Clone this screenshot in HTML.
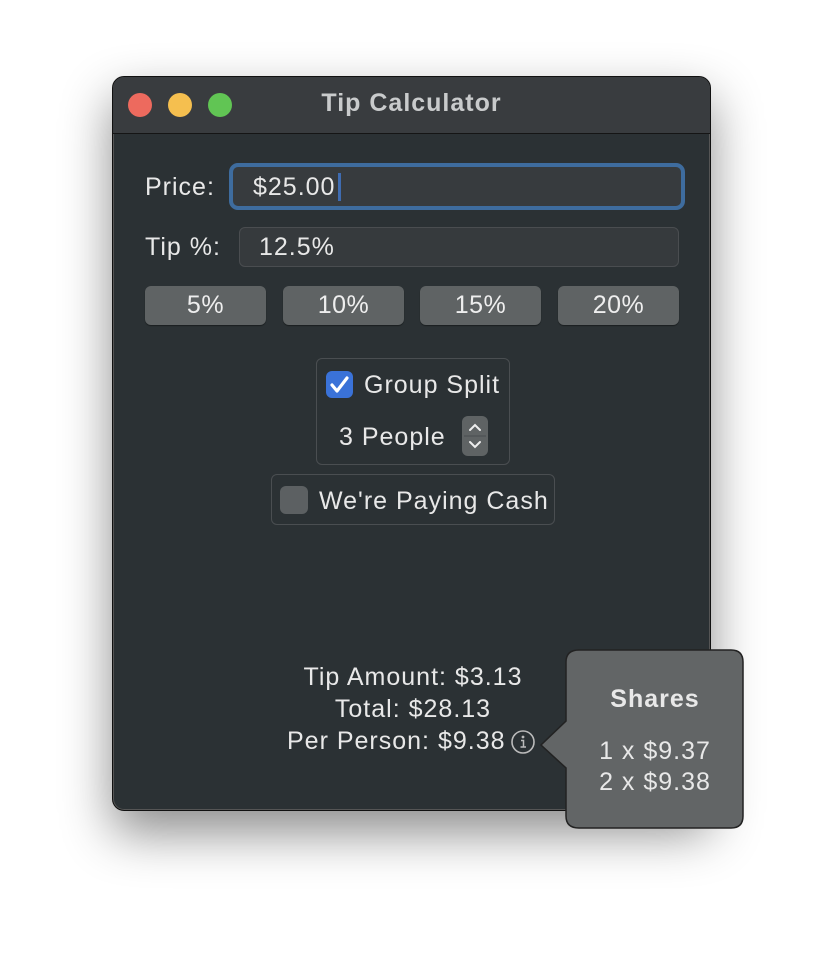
<!DOCTYPE html>
<html><head><style>
body{margin:0;width:824px;height:960px;background:#fff;position:relative;overflow:hidden;font-family:"Liberation Sans",sans-serif;}
.win{position:absolute;left:112px;top:76px;width:599px;height:735px;border-radius:12px;background:#2b3134;border:1px solid #111;box-sizing:border-box;box-shadow:0 22px 50px rgba(0,0,0,.45),0 0 0 1px #555 inset;overflow:hidden;}
.tb{position:absolute;left:0;top:0;right:0;height:56px;background:#393c3f;border-bottom:1px solid #151515;}
.dot{position:absolute;top:16px;width:24px;height:24px;border-radius:50%;}
.t{position:absolute;color:#e8e8e8;font-size:25px;letter-spacing:1px;white-space:nowrap;}
.field{position:absolute;background:#363a3d;border:1px solid #4a4d50;border-radius:6px;box-sizing:border-box;}
.btn{position:absolute;top:209px;width:121px;height:39px;background:#5f6364;border-radius:6px;color:#eee;font-size:25px;letter-spacing:0.5px;text-align:center;line-height:39px;box-shadow:0 1px 1px rgba(0,0,0,.4);}
.box{position:absolute;border:1px solid #4a4e51;border-radius:6px;box-sizing:border-box;}
</style></head><body>
<div class="win">
 <div class="tb">
  <div class="dot" style="left:15px;background:#ed6a5e"></div>
  <div class="dot" style="left:55px;background:#f5bf4f"></div>
  <div class="dot" style="left:95px;background:#61c554"></div>
  <div class="t" style="left:0;right:0;text-align:center;top:12px;font-weight:bold;color:#c9cbcc">Tip Calculator</div>
 </div>
 <div class="t" style="left:32px;top:96px">Price:</div>
 <div class="field" style="left:116px;top:86px;width:456px;height:47px;border:4px solid #3e6c9e;border-radius:9px;background:#373b3e"></div>
 <div class="t" style="left:140px;top:96px">$25.00</div>
 <div style="position:absolute;left:225px;top:96px;width:3px;height:28px;background:#3f6cb1"></div>
 <div class="t" style="left:32px;top:156px">Tip %:</div>
 <div class="field" style="left:126px;top:150px;width:440px;height:40px"></div>
 <div class="t" style="left:146px;top:156px">12.5%</div>
 <div class="btn" style="left:32px">5%</div>
 <div class="btn" style="left:170px">10%</div>
 <div class="btn" style="left:307px">15%</div>
 <div class="btn" style="left:445px">20%</div>
 <div class="box" style="left:203px;top:281px;width:194px;height:107px"></div>
 <div style="position:absolute;left:213px;top:294px;width:27px;height:27px;background:#3a72d8;border-radius:6px"></div>
 <svg style="position:absolute;left:213px;top:294px" width="27" height="27"><path d="M6 14 L11 20 L21 7" stroke="#fff" stroke-width="3.2" fill="none" stroke-linecap="round" stroke-linejoin="round"/></svg>
 <div class="t" style="left:251px;top:294px">Group Split</div>
 <div class="t" style="left:226px;top:346px">3 People</div>
 <div style="position:absolute;left:349px;top:339px;width:26px;height:40px;background:#5f6364;border-radius:6px"></div>
 <svg style="position:absolute;left:349px;top:339px" width="26" height="40"><path d="M8 14 L13 9 L18 14 M8 26 L13 31 L18 26" stroke="#eee" stroke-width="2" fill="none" stroke-linecap="round"/><line x1="2" y1="20" x2="24" y2="20" stroke="#4a4e50"/></svg>
 <div class="box" style="left:158px;top:397px;width:284px;height:51px"></div>
 <div style="position:absolute;left:167px;top:409px;width:28px;height:28px;background:#5c6062;border-radius:6px"></div>
 <div class="t" style="left:206px;top:410px">We're Paying Cash</div>
 <div class="t" style="left:0;width:600px;text-align:center;top:586px">Tip Amount: $3.13</div>
 <div class="t" style="left:0;width:600px;text-align:center;top:618px">Total: $28.13</div>
 <div class="t" style="left:174px;top:650px">Per Person: $9.38</div>
 <svg style="position:absolute;left:397px;top:652px" width="26" height="26"><circle cx="13" cy="13" r="11" stroke="#bbb" stroke-width="1.6" fill="none"/><circle cx="13" cy="8" r="1.4" fill="#bbb"/><path d="M11 11.5 H13.5 V18 M10.5 18 H16" stroke="#bbb" stroke-width="1.5" fill="none"/></svg>
</div>
<svg style="position:absolute;left:535px;top:648px" width="212" height="184">
 <path d="M44 2 H196 Q208 2 208 14 V168 Q208 180 196 180 H44 Q31 180 31 168 V120 L6 97 L31 73 V14 Q31 2 44 2 Z" fill="#626566" stroke="#222" stroke-width="1.5"/>
</svg>
<div class="t" style="left:566px;width:178px;text-align:center;top:685px;font-weight:bold">Shares</div>
<div class="t" style="left:566px;width:178px;text-align:center;top:737px">1 x $9.37</div>
<div class="t" style="left:566px;width:178px;text-align:center;top:768px">2 x $9.38</div>
</body></html>
